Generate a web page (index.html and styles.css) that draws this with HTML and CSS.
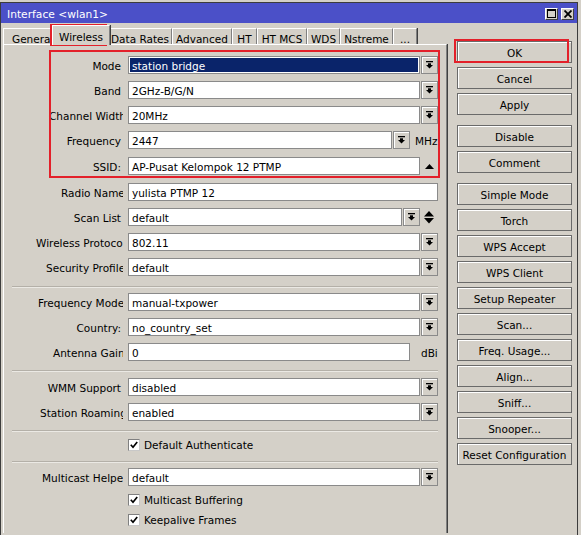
FILE: index.html
```html
<!DOCTYPE html>
<html>
<head>
<meta charset="utf-8">
<title>Interface wlan1</title>
<link rel="stylesheet" href="styles.css">
</head>
<body>
<div class="window">
  <div class="titlebar">
    <span class="title">Interface &lt;wlan1&gt;</span>
    <div class="tbtns">
      <span class="tbtn"><svg width="9" height="9" viewBox="0 0 9 9"><rect x="0.5" y="0.5" width="8" height="8" fill="none" stroke="#000"/><rect x="0" y="0" width="9" height="2" fill="#000"/></svg></span>
      <span class="tbtn"><svg width="8" height="8" viewBox="0 0 8 8"><path d="M0.5 0.5 L7.5 7.5 M7.5 0.5 L0.5 7.5" stroke="#000" stroke-width="1.8"/></svg></span>
    </div>
  </div>
  <div class="main">
    <div class="left">
      <div class="tabs">
        <div class="tab t-general"><span>General</span></div>
        <div class="tab t-wireless active">Wireless</div>
        <div class="tab t-rates">Data Rates</div>
        <div class="tab t-adv">Advanced</div>
        <div class="tab t-ht">HT</div>
        <div class="tab t-mcs">HT MCS</div>
        <div class="tab t-wds">WDS</div>
        <div class="tab t-nstreme">Nstreme</div>
        <div class="tab t-more">...</div>
      </div>
      <div class="panel">
        <div class="row">
          <div class="lbl">Mode</div>
          <div class="fld selected">station bridge</div>
          <div class="dd"><svg width="7" height="8" viewBox="0 0 7 8"><rect x="0" y="0" width="7" height="1.3"/><rect x="2" y="2.3" width="3" height="1.7"/><polygon points="0,4 7,4 3.5,7.6"/></svg></div>
        </div>
        <div class="row">
          <div class="lbl">Band</div>
          <div class="fld">2GHz-B/G/N</div>
          <div class="dd"><svg width="7" height="8" viewBox="0 0 7 8"><rect x="0" y="0" width="7" height="1.3"/><rect x="2" y="2.3" width="3" height="1.7"/><polygon points="0,4 7,4 3.5,7.6"/></svg></div>
        </div>
        <div class="row">
          <div class="lbl clip c-cw">Channel Width</div>
          <div class="fld">20MHz</div>
          <div class="dd"><svg width="7" height="8" viewBox="0 0 7 8"><rect x="0" y="0" width="7" height="1.3"/><rect x="2" y="2.3" width="3" height="1.7"/><polygon points="0,4 7,4 3.5,7.6"/></svg></div>
        </div>
        <div class="row tall">
          <div class="lbl">Frequency</div>
          <div class="fld w-freq">2447</div>
          <div class="dd"><svg width="7" height="8" viewBox="0 0 7 8"><rect x="0" y="0" width="7" height="1.3"/><rect x="2" y="2.3" width="3" height="1.7"/><polygon points="0,4 7,4 3.5,7.6"/></svg></div>
          <div class="unit u-mhz">MHz</div>
        </div>
        <div class="row tall">
          <div class="lbl">SSID:</div>
          <div class="fld">AP-Pusat Kelompok 12 PTMP</div>
          <div class="up"><svg width="9" height="5" viewBox="0 0 9 5"><polygon points="4.5,0 9,5 0,5"/></svg></div>
        </div>
        <div class="row">
          <div class="lbl clip c-rn">Radio Name</div>
          <div class="fld w-full">yulista PTMP 12</div>
        </div>
        <div class="row">
          <div class="lbl">Scan List</div>
          <div class="fld w-scan">default</div>
          <div class="dd"><svg width="7" height="8" viewBox="0 0 7 8"><rect x="0" y="0" width="7" height="1.3"/><rect x="2" y="2.3" width="3" height="1.7"/><polygon points="0,4 7,4 3.5,7.6"/></svg></div>
          <div class="updown"><svg width="10" height="13" viewBox="0 0 10 13"><polygon points="5,0 10,5.5 0,5.5"/><polygon points="0,7 10,7 5,12.5"/></svg></div>
        </div>
        <div class="row">
          <div class="lbl clip c-wp">Wireless Protocol</div>
          <div class="fld">802.11</div>
          <div class="dd"><svg width="7" height="8" viewBox="0 0 7 8"><rect x="0" y="0" width="7" height="1.3"/><rect x="2" y="2.3" width="3" height="1.7"/><polygon points="0,4 7,4 3.5,7.6"/></svg></div>
        </div>
        <div class="row">
          <div class="lbl clip c-sp">Security Profile</div>
          <div class="fld">default</div>
          <div class="dd"><svg width="7" height="8" viewBox="0 0 7 8"><rect x="0" y="0" width="7" height="1.3"/><rect x="2" y="2.3" width="3" height="1.7"/><polygon points="0,4 7,4 3.5,7.6"/></svg></div>
        </div>
        <div class="sep s6"></div>
        <div class="row">
          <div class="lbl clip c-fm">Frequency Mode</div>
          <div class="fld">manual-txpower</div>
          <div class="dd"><svg width="7" height="8" viewBox="0 0 7 8"><rect x="0" y="0" width="7" height="1.3"/><rect x="2" y="2.3" width="3" height="1.7"/><polygon points="0,4 7,4 3.5,7.6"/></svg></div>
        </div>
        <div class="row">
          <div class="lbl">Country:</div>
          <div class="fld">no_country_set</div>
          <div class="dd"><svg width="7" height="8" viewBox="0 0 7 8"><rect x="0" y="0" width="7" height="1.3"/><rect x="2" y="2.3" width="3" height="1.7"/><polygon points="0,4 7,4 3.5,7.6"/></svg></div>
        </div>
        <div class="row">
          <div class="lbl clip c-ag">Antenna Gain</div>
          <div class="fld w-ag">0</div>
          <div class="unit u-dbi">dBi</div>
        </div>
        <div class="sep s5"></div>
        <div class="row">
          <div class="lbl">WMM Support</div>
          <div class="fld">disabled</div>
          <div class="dd"><svg width="7" height="8" viewBox="0 0 7 8"><rect x="0" y="0" width="7" height="1.3"/><rect x="2" y="2.3" width="3" height="1.7"/><polygon points="0,4 7,4 3.5,7.6"/></svg></div>
        </div>
        <div class="row">
          <div class="lbl clip c-sr">Station Roaming</div>
          <div class="fld">enabled</div>
          <div class="dd"><svg width="7" height="8" viewBox="0 0 7 8"><rect x="0" y="0" width="7" height="1.3"/><rect x="2" y="2.3" width="3" height="1.7"/><polygon points="0,4 7,4 3.5,7.6"/></svg></div>
        </div>
        <div class="sep s5"></div>
        <div class="crow">
          <span class="cb"><svg width="8" height="8" viewBox="0 0 8 8"><path d="M0.8 3.8 L3 6.2 L7.2 1" fill="none" stroke="#000" stroke-width="1.7"/></svg></span>
          <span>Default Authenticate</span>
        </div>
        <div class="sep s6"></div>
        <div class="row">
          <div class="lbl clip c-mh">Multicast Helper</div>
          <div class="fld">default</div>
          <div class="dd"><svg width="7" height="8" viewBox="0 0 7 8"><rect x="0" y="0" width="7" height="1.3"/><rect x="2" y="2.3" width="3" height="1.7"/><polygon points="0,4 7,4 3.5,7.6"/></svg></div>
        </div>
        <div class="crow">
          <span class="cb"><svg width="8" height="8" viewBox="0 0 8 8"><path d="M0.8 3.8 L3 6.2 L7.2 1" fill="none" stroke="#000" stroke-width="1.7"/></svg></span>
          <span>Multicast Buffering</span>
        </div>
        <div class="crow">
          <span class="cb"><svg width="8" height="8" viewBox="0 0 8 8"><path d="M0.8 3.8 L3 6.2 L7.2 1" fill="none" stroke="#000" stroke-width="1.7"/></svg></span>
          <span>Keepalive Frames</span>
        </div>
      </div>
    </div>
    <div class="buttons">
      <div class="btn">OK</div>
      <div class="btn">Cancel</div>
      <div class="btn gap">Apply</div>
      <div class="btn">Disable</div>
      <div class="btn gap">Comment</div>
      <div class="btn">Simple Mode</div>
      <div class="btn">Torch</div>
      <div class="btn">WPS Accept</div>
      <div class="btn">WPS Client</div>
      <div class="btn">Setup Repeater</div>
      <div class="btn">Scan...</div>
      <div class="btn">Freq. Usage...</div>
      <div class="btn">Align...</div>
      <div class="btn">Sniff...</div>
      <div class="btn">Snooper...</div>
      <div class="btn">Reset Configuration</div>
    </div>
  </div>
</div>
<div class="mark mark-tab"></div>
<div class="mark mark-form"></div>
<div class="mark mark-ok"></div>
</body>
</html>
```
FILE: styles.css
```css
* { box-sizing: border-box; }
body {
  margin: 0;
  background: #d4d0c8;
  font-family: "DejaVu Sans", sans-serif;
  font-size: 10.5px;
  color: #000;
  overflow: hidden;
}
.window {
  margin-top: 2px;
  width: 578px;
  height: 533px;
  border: 1px solid #3c3c3c;
  border-bottom: 0;
  background: #d4d0c8;
}
.titlebar {
  height: 20px;
  background: #4b50c8;
  color: #fff;
  display: flex;
  align-items: center;
  justify-content: space-between;
  padding: 0 3px 0 6px;
  font-size: 10.7px;
}
.title { margin-top: 2px; }
.tbtns { display: flex; gap: 3px; padding-top: 1px; }
.tbtn {
  width: 13px;
  height: 12px;
  background: #d4d0c8;
  border: 1px solid #404040;
  border-top-color: #fff;
  border-left-color: #fff;
  display: flex;
  align-items: center;
  justify-content: center;
}
.main { display: flex; }
.left { margin-left: 2px; width: 444px; }
.tabs {
  display: flex;
  align-items: flex-end;
  height: 21px;
}
.tab {
  height: 16px;
  border-top: 1px solid #fff;
  border-left: 1px solid #fff;
  border-right: 1px solid #808080;
  box-shadow: 1px 0 0 #404040;
  text-align: center;
  line-height: 20px;
  white-space: nowrap;
  background: #d4d0c8;
}
.tab.active {
  height: 20px;
  margin: 0 -2px -1px -2px;
  position: relative;
  z-index: 1;
  line-height: 22px;
}
.t-general { width: 51px; text-align: left; padding-left: 8px; overflow: hidden; }
.t-wireless { width: 58px; }
.t-rates { width: 64px; }
.t-adv { width: 60px; }
.t-ht { width: 25px; }
.t-mcs { width: 50px; }
.t-wds { width: 33px; }
.t-nstreme { width: 53px; }
.t-more { width: 24px; }
.panel {
  height: 489px;
  border-top: 1px solid #fff;
  border-left: 1px solid #fff;
  border-right: 1px solid #808080;
  box-shadow: 1px 0 0 #404040;
  padding-top: 8px;
}
.row {
  display: flex;
  align-items: flex-start;
  height: 25px;
  padding-top: 3px;
}
.row.tall { height: 26px; }
.lbl {
  width: 119px;
  margin-right: 5px;
  height: 18px;
  line-height: 20px;
  text-align: right;
  padding-right: 2px;
  white-space: nowrap;
  overflow: hidden;
}
.lbl.clip { text-align: left; padding-right: 0; }
.c-cw { padding-left: 45px; }
.c-rn { padding-left: 57px; }
.c-wp { padding-left: 32px; }
.c-sp { padding-left: 42px; }
.c-fm { padding-left: 34px; }
.c-ag { padding-left: 49px; }
.c-sr { padding-left: 36px; }
.c-mh { padding-left: 38px; }
.fld {
  width: 292px;
  height: 18px;
  background: #fff;
  border: 1px solid #8a8a8a;
  line-height: 18px;
  padding-left: 3px;
  white-space: nowrap;
  overflow: hidden;
}
.fld.selected {
  background: #0a246a;
  color: #fff;
  box-shadow: inset 0 0 0 1px #fff;
}
.w-full { width: 310px; }
.w-freq { width: 264px; }
.w-scan { width: 274px; }
.w-ag { width: 282px; }
.dd {
  width: 17px;
  height: 18px;
  margin-left: 1px;
  border: 1px solid #8a8a8a;
  box-shadow: inset 1px 1px 0 #fff;
  background: #d4d0c8;
  display: flex;
  align-items: center;
  justify-content: center;
}
.dd svg { fill: #000; }
.unit {
  height: 18px;
  line-height: 20px;
  white-space: nowrap;
  overflow: hidden;
}
.u-mhz { margin-left: 5px; width: 23px; }
.u-dbi { margin-left: 11px; width: 17px; }
.up { margin-left: 5px; height: 18px; display: flex; align-items: center; }
.up svg, .updown svg { fill: #000; }
.updown { margin-left: 4px; height: 18px; display: flex; align-items: center; }
.sep {
  height: 10px;
  margin: 0 8px;
}
.sep::after {
  content: "";
  display: block;
  height: 1px;
  background: #b4b0a8;
  border-bottom: 1px solid #ebe9e4;
  box-sizing: content-box;
}
.sep.s6 { padding-top: 6px; }
.sep.s5 { padding-top: 5px; }
.crow {
  height: 20px;
  display: flex;
  align-items: center;
  padding-left: 124px;
}
.cb {
  width: 12px;
  height: 12px;
  background: #fff;
  border: 1px solid #808080;
  border-right-color: #c8c8c8;
  border-bottom-color: #c8c8c8;
  margin-right: 4px;
  display: flex;
  align-items: center;
  justify-content: center;
}
.buttons {
  margin-left: 10px;
  width: 115px;
  padding-top: 18px;
}
.btn {
  height: 22px;
  margin-bottom: 4px;
  border: 1px solid #6a6a6a;
  box-shadow: inset 1px 1px 0 #fff;
  background: #d4d0c8;
  text-align: center;
  line-height: 22px;
  white-space: nowrap;
  overflow: hidden;
}
.btn.gap { margin-bottom: 10px; }
.mark {
  position: absolute;
  border: 2px solid #e3202a;
}
.mark-tab { left: 50px; top: 24px; width: 57px; height: 22px; }
.mark-form { left: 49px; top: 50px; width: 391px; height: 128px; }
.mark-ok { left: 454px; top: 39px; width: 115px; height: 24px; }
```
